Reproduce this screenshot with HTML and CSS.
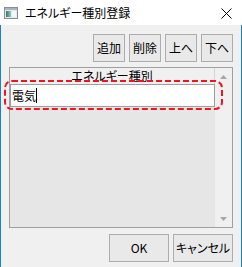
FILE: index.html
```html
<!DOCTYPE html>
<html lang="ja">
<head>
    <meta charset="UTF-8">
    <title>エネルギー種別登録</title>
    <link rel="stylesheet" href="styles.css">
</head>
<body>
    <div class="window">
        <div class="titlebar">
            <svg class="app-icon" width="14" height="12" viewBox="0 0 14 12">
                <defs>
                    <linearGradient id="pane" x1="0" y1="0" x2="1" y2="0">
                        <stop offset="0" stop-color="#2f7a66"/>
                        <stop offset="1" stop-color="#9cc8bd"/>
                    </linearGradient>
                </defs>
                <rect x="0.5" y="0.5" width="13" height="11" fill="#e4eaee" stroke="#8a8f94"/>
                <rect x="1" y="1" width="12" height="2" fill="#a9b4bc"/>
                <rect x="2" y="4" width="5" height="6" fill="url(#pane)"/>
                <rect x="8" y="4" width="4" height="6" fill="#f4f7f9"/>
            </svg>
            <span class="title">エネルギー種別登録</span>
            <svg class="close" width="11" height="11" viewBox="0 0 11 11">
                <path d="M0.5 0.5 L10.5 10.5 M10.5 0.5 L0.5 10.5" stroke="#000" stroke-width="1" fill="none"/>
            </svg>
        </div>

        <div class="client">
            <div class="toolbar">
                <button class="btn btn-small">追加</button>
                <button class="btn btn-small">削除</button>
                <button class="btn btn-small">上へ</button>
                <button class="btn btn-small">下へ</button>
            </div>

            <div class="table">
                <div class="table-main">
                    <div class="table-header">エネルギー種別</div>
                    <div class="cell-editor">電気<span class="caret"></span></div>
                    <div class="viewport"></div>
                </div>
                <div class="scrollbar">
                    <svg class="arrow" width="7" height="4" viewBox="0 0 7 4"><path d="M3.5 0 L7 4 L0 4 Z" fill="#a6a6a6"/></svg>
                    <svg class="arrow" width="7" height="4" viewBox="0 0 7 4"><path d="M0 0 L7 0 L3.5 4 Z" fill="#a6a6a6"/></svg>
                </div>

                <!-- 強調枠 -->
                <svg class="highlight" width="219" height="30" viewBox="0 0 219 30">
                    <rect x="1" y="1" width="217" height="28" rx="7" ry="7" fill="none" stroke="#f0141e" stroke-width="2" stroke-dasharray="6 3"/>
                </svg>
            </div>

            <div class="footer">
                <button class="btn btn-wide">OK</button>
                <button class="btn btn-wide">キャンセル</button>
            </div>
        </div>
    </div>
</body>
</html>
```

FILE: styles.css
```css
:root {
    --accent: #1a7fd6;
    --face: #f0f0f0;
    --frame: #a0a0a0;
    --btn-border: #adadad;
}

html, body {
    margin: 0;
    padding: 0;
}

body {
    font-family: "Noto Sans CJK JP", "Noto Sans", sans-serif;
    font-size: 12px;
    font-feature-settings: "palt";
    color: #000;
    background: var(--face);
}

.window {
    width: 242px;
    height: 267px;
    display: flex;
    flex-direction: column;
}

.titlebar {
    height: 25px;
    background: #fff;
    display: flex;
    align-items: center;
    padding: 0 10px 0 4px;
    flex-shrink: 0;
}

.app-icon {
    display: block;
    margin-top: 1px;
}

.title {
    margin-left: 7px;
    line-height: 14px;
    flex: 1;
}

.close {
    display: block;
    margin-top: 1px;
}

.client {
    flex: 1;
    display: flex;
    flex-direction: column;
    padding: 9px 8px 6px;
    border: 1px solid var(--accent);
    border-top: none;
    background: var(--face);
}

.toolbar,
.footer {
    display: flex;
    justify-content: flex-end;
    gap: 4px;
}

.btn {
    height: 28px;
    padding: 0;
    margin: 0;
    background: #e9e9e9;
    border: 1px solid var(--btn-border);
    font-family: inherit;
    font-size: 12px;
    font-feature-settings: "palt";
    color: #000;
    line-height: 14px;
}

.btn-small {
    width: 32px;
}

.btn-wide {
    width: 60px;
}

.table {
    position: relative;
    height: 159px;
    margin: 5px 0 6px;
    border: 1px solid var(--frame);
    display: flex;
}

.table-main {
    flex: 1;
    display: flex;
    flex-direction: column;
    background: #e6e6e6;
}

.table-header {
    height: 16px;
    line-height: 16px;
    text-align: center;
    background: var(--face);
    border-right: 1px solid #d5d5d5;
}

.cell-editor {
    height: 23px;
    box-sizing: border-box;
    border: 1px solid #9d9d9d;
    background: #fff;
    padding-left: 1px;
    line-height: 20px;
    display: flex;
    align-items: center;
}

.caret {
    display: inline-block;
    width: 1px;
    height: 15px;
    background: #000;
    margin-left: 0;
}

.viewport {
    flex: 1;
}

.scrollbar {
    width: 17px;
    background: var(--face);
    display: flex;
    flex-direction: column;
    justify-content: space-between;
    align-items: center;
    padding: 7px 0 6px;
}

.arrow {
    display: block;
}

.highlight {
    position: absolute;
    left: -6px;
    top: 12px;
}
```
